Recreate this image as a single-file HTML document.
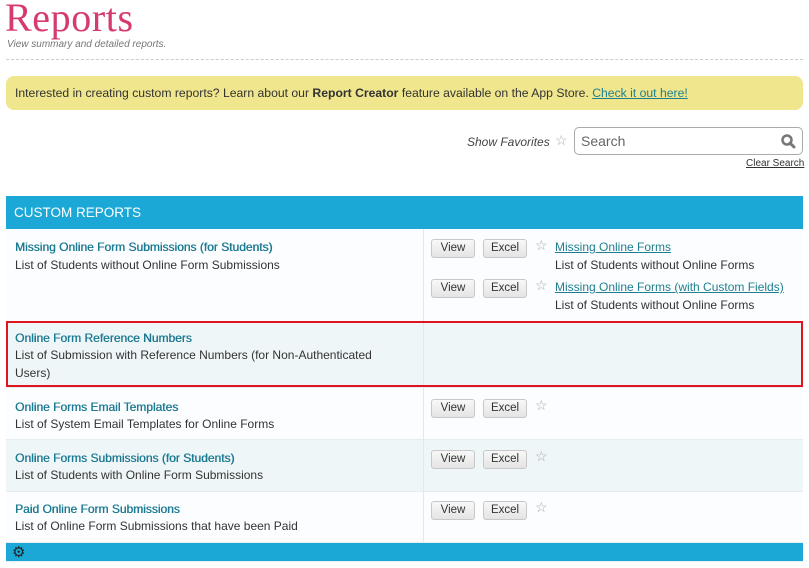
<!DOCTYPE html>
<html><head><style>
*{margin:0;padding:0;box-sizing:border-box}
body{width:809px;height:568px;background:#fff;font-family:"Liberation Sans",sans-serif;color:#333;position:relative;overflow:hidden;font-size:12px}
.a{position:absolute;white-space:nowrap}
h1{position:absolute;left:5px;top:-6px;font-family:"Liberation Serif",serif;font-weight:normal;font-size:40px;color:#d63b6e;letter-spacing:0.6px}
.sub{left:7px;top:39px;font-size:10px;font-style:italic;color:#777}
.hr{position:absolute;left:6px;top:59px;width:797px;border-top:1px dashed #ccc}
.banner{position:absolute;left:6px;top:76px;width:797px;height:34px;background:#efe68d;border-radius:8px;font-size:12.2px;line-height:34px;padding-left:9px;color:#333}
.banner a{color:#1f7f8e;text-decoration:underline}
.search{position:absolute;left:574px;top:127px;width:229px;height:28px;border:1px solid #aaa;border-radius:5px;font-size:14px;color:#666;padding:5px 6px}
.row{position:absolute;left:6px;width:797px;border-bottom:1px solid #e4eef2}
.div{position:absolute;left:423px;top:229px;width:1px;height:314px;background:#dfe9ee}
.t{color:#1d7a93;font-size:12px;text-shadow:0.4px 0 0 #1d7a93}
.d{font-size:12px;color:#333}
.btn{position:absolute;height:19px;border:1px solid #c8c8c8;border-radius:3px;background:linear-gradient(#f8f8f8,#e4e4e4);font-size:11.5px;line-height:17px;text-align:center;color:#333}
.star{position:absolute;color:#aaa;font-size:14px}
.lnk{color:#1f7f8e;text-decoration:underline;font-size:12px}
</style></head><body>
<h1>Reports</h1>
<div class="a sub">View summary and detailed reports.</div>
<div class="hr"></div>
<div class="banner">Interested in creating custom reports? Learn about our <b>Report Creator</b> feature available on the App Store. <a>Check it out here!</a></div>
<div class="a" style="left:467px;top:135px;font-style:italic;font-size:12px;color:#444">Show Favorites</div>
<div class="star" style="left:555px;top:132px">☆</div>
<div class="search">Search</div>
<svg class="a" style="left:780px;top:133px" width="16" height="16" viewBox="0 0 16 16"><circle cx="7" cy="7" r="4.5" fill="none" stroke="#777" stroke-width="2.5"/><path d="M10 10l4 4" stroke="#777" stroke-width="3" stroke-linecap="round"/></svg>
<div class="a" style="left:746px;top:158px;font-size:10px;color:#333;text-decoration:underline">Clear Search</div>

<div class="row" style="top:196px;height:33px;background:#1ba8d6;border:none"></div>
<div class="a" style="left:14px;top:205px;color:#fff;font-size:13.5px">CUSTOM REPORTS</div>
<div class="row" style="top:229px;height:93px;background:#fbfdfe"></div>
<div class="row" style="top:322px;height:66px;background:#eff6f8"></div>
<div class="row" style="top:388px;height:52px;background:#fbfdfe"></div>
<div class="row" style="top:440px;height:52px;background:#eff6f8"></div>
<div class="row" style="top:492px;height:51px;background:#fbfdfe"></div>
<div class="row" style="top:543px;height:19px;background:#1ba8d6"></div>
<div class="div"></div>
<div style="position:absolute;left:6px;top:321px;width:797px;height:66px;border:2px solid #e0141e"></div>

<div class="a t" style="left:15px;top:240px">Missing Online Form Submissions (for Students)</div>
<div class="a d" style="left:15px;top:258px">List of Students without Online Form Submissions</div>
<div class="a t" style="left:15px;top:331px">Online Form Reference Numbers</div>
<div class="a d" style="left:15px;top:348px">List of Submission with Reference Numbers (for Non-Authenticated</div>
<div class="a d" style="left:15px;top:366px">Users)</div>
<div class="a t" style="left:15px;top:400px">Online Forms Email Templates</div>
<div class="a d" style="left:15px;top:417px">List of System Email Templates for Online Forms</div>
<div class="a t" style="left:15px;top:451px">Online Forms Submissions (for Students)</div>
<div class="a d" style="left:15px;top:468px">List of Students with Online Form Submissions</div>
<div class="a t" style="left:15px;top:502px">Paid Online Form Submissions</div>
<div class="a d" style="left:15px;top:519px">List of Online Form Submissions that have been Paid</div>

<div class="btn" style="left:431px;top:239px;width:44px">View</div><div class="btn" style="left:483px;top:239px;width:44px">Excel</div><div class="star" style="left:535px;top:237px">☆</div>
<div class="a lnk" style="left:555px;top:240px">Missing Online Forms</div>
<div class="a d" style="left:555px;top:258px">List of Students without Online Forms</div>
<div class="btn" style="left:431px;top:279px;width:44px">View</div><div class="btn" style="left:483px;top:279px;width:44px">Excel</div><div class="star" style="left:535px;top:277px">☆</div>
<div class="a lnk" style="left:555px;top:280px">Missing Online Forms (with Custom Fields)</div>
<div class="a d" style="left:555px;top:298px">List of Students without Online Forms</div>

<div class="btn" style="left:431px;top:399px;width:44px">View</div><div class="btn" style="left:483px;top:399px;width:44px">Excel</div><div class="star" style="left:535px;top:397px">☆</div>
<div class="btn" style="left:431px;top:450px;width:44px">View</div><div class="btn" style="left:483px;top:450px;width:44px">Excel</div><div class="star" style="left:535px;top:448px">☆</div>
<div class="btn" style="left:431px;top:501px;width:44px">View</div><div class="btn" style="left:483px;top:501px;width:44px">Excel</div><div class="star" style="left:535px;top:499px">☆</div>
<div class="a" style="left:12px;top:543px;font-size:15px;color:#222">⚙</div>
</body></html>
